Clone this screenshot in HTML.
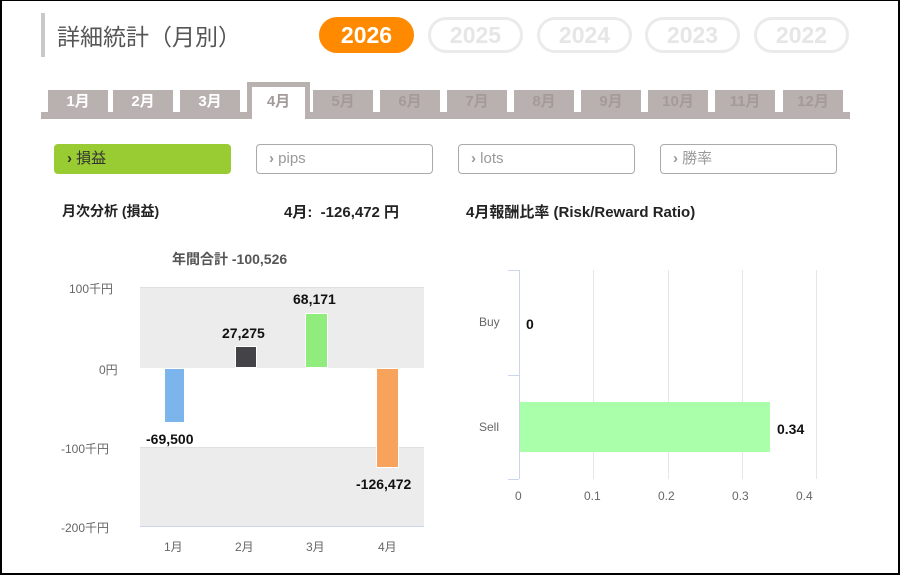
<!DOCTYPE html>
<html><head><meta charset="utf-8"><style>
*{margin:0;padding:0;box-sizing:border-box}
body{width:900px;height:575px;position:relative;background:#fff;font-family:"Liberation Sans","Noto Sans CJK JP",sans-serif;overflow:hidden}
.frame{position:absolute;left:0;top:0;width:900px;height:575px;border:2px solid #000;border-top-width:1px}
.a{position:absolute}
.pill{position:absolute;top:17px;height:36px;width:95px;border-radius:18px;font-weight:bold;font-size:23px;text-align:center;line-height:30px;border:3px solid #ebebeb;color:#e6e6e6}
.tab{position:absolute;top:90px;width:60px;height:24px;background:#b9b1b0;color:#a39a99;font-weight:bold;font-size:15px;text-align:center;line-height:24px}
.btn{position:absolute;top:144px;width:177px;height:30px;border:1px solid #aaa;border-radius:4px;font-size:15px;color:#999;line-height:28px;padding-left:12px}
.lbl{font-size:12px;color:#666;position:absolute}
.v{font-size:14px;font-weight:bold;color:#111;position:absolute}
</style></head><body>
<div class="a" style="left:41px;top:13px;width:4px;height:44px;background:#c8c8c8"></div>
<div class="a" style="left:57px;top:18px;font-size:23px;color:#555">詳細統計（月別）</div>
<div class="pill" style="left:319px;background:#ff8a00;border-color:#ff8a00;color:#fff">2026</div>
<div class="pill" style="left:428px">2025</div>
<div class="pill" style="left:537px">2024</div>
<div class="pill" style="left:645px">2023</div>
<div class="pill" style="left:754px">2022</div>

<div class="a" style="left:41px;top:112px;width:809px;height:7px;background:#b9b1b0"></div>
<div class="tab" style="left:48px;color:#fff">1月</div>
<div class="tab" style="left:113px;color:#fff">2月</div>
<div class="tab" style="left:180px;color:#fff">3月</div>
<div class="a" style="left:247px;top:82px;width:63px;height:37px;background:#fff;border:5px solid #b9b1b0;border-bottom:none;color:#a39a99;font-weight:bold;font-size:15px;text-align:center;line-height:30px">4月</div>
<div class="tab" style="left:313px">5月</div>
<div class="tab" style="left:380px">6月</div>
<div class="tab" style="left:447px">7月</div>
<div class="tab" style="left:514px">8月</div>
<div class="tab" style="left:581px">9月</div>
<div class="tab" style="left:648px">10月</div>
<div class="tab" style="left:715px">11月</div>
<div class="tab" style="left:783px">12月</div>

<div class="btn" style="left:54px;background:#99cc33;border-color:#99cc33;color:#333"><b>›</b> 損益</div>
<div class="btn" style="left:256px"><b>›</b> pips</div>
<div class="btn" style="left:458px"><b>›</b> lots</div>
<div class="btn" style="left:660px"><b>›</b> 勝率</div>

<div class="a" style="left:62px;top:201px;font-size:14px;font-weight:bold;color:#222">月次分析 (損益)</div>
<div class="a" style="left:284px;top:201px;font-size:15px;font-weight:bold;color:#222">4月:&nbsp; -126,472 円</div>
<div class="a" style="left:466px;top:201px;font-size:15px;font-weight:bold;color:#222">4月報酬比率 (Risk/Reward Ratio)</div>

<div class="a" style="left:172px;top:249px;font-size:14px;font-weight:bold;color:#555">年間合計 -100,526</div>
<div class="a" style="left:140px;top:287px;width:284px;height:81px;background:#ececec;border-top:1px solid #e0e0e0"></div>
<div class="a" style="left:140px;top:447px;width:284px;height:80px;background:#ececec;border-top:1px solid #e0e0e0;border-bottom:1px solid #ccd6eb"></div>
<div class="lbl" style="left:69px;top:280px">100千円</div>
<div class="lbl" style="left:99px;top:361px">0円</div>
<div class="lbl" style="left:61px;top:440px">-100千円</div>
<div class="lbl" style="left:61px;top:519px">-200千円</div>
<div class="a" style="left:164px;top:368px;width:21px;height:55px;background:#7cb5ec;border:1px solid #fff"></div>
<div class="a" style="left:235px;top:346px;width:22px;height:22px;background:#434348;border:1px solid #fff"></div>
<div class="a" style="left:305px;top:313px;width:23px;height:55px;background:#90ed7d;border:1px solid #fff"></div>
<div class="a" style="left:376px;top:368px;width:23px;height:100px;background:#f7a35c;border:1px solid #fff"></div>
<div class="v" style="left:146px;top:431px">-69,500</div>
<div class="v" style="left:222px;top:325px">27,275</div>
<div class="v" style="left:293px;top:291px">68,171</div>
<div class="v" style="left:356px;top:476px">-126,472</div>
<div class="lbl" style="left:164px;top:538px">1月</div>
<div class="lbl" style="left:235px;top:538px">2月</div>
<div class="lbl" style="left:306px;top:538px">3月</div>
<div class="lbl" style="left:378px;top:538px">4月</div>

<div class="a" style="left:593px;top:270px;width:1px;height:209px;background:#e6e6e6"></div>
<div class="a" style="left:668px;top:270px;width:1px;height:209px;background:#e6e6e6"></div>
<div class="a" style="left:742px;top:270px;width:1px;height:209px;background:#e6e6e6"></div>
<div class="a" style="left:816px;top:270px;width:1px;height:209px;background:#e6e6e6"></div>
<div class="a" style="left:519px;top:270px;width:1px;height:209px;background:#ccd6eb"></div>
<div class="a" style="left:508px;top:270px;width:11px;height:1px;background:#ccd6eb"></div>
<div class="a" style="left:508px;top:375px;width:11px;height:1px;background:#ccd6eb"></div>
<div class="a" style="left:508px;top:479px;width:11px;height:1px;background:#ccd6eb"></div>
<div class="a" style="left:520px;top:402px;width:250px;height:50px;background:#aaffaa"></div>
<div class="lbl" style="left:479px;top:315px">Buy</div>
<div class="lbl" style="left:479px;top:420px">Sell</div>
<div class="v" style="left:526px;top:316px">0</div>
<div class="v" style="left:777px;top:421px">0.34</div>
<div class="lbl" style="left:515px;top:489px">0</div>
<div class="lbl" style="left:584px;top:489px">0.1</div>
<div class="lbl" style="left:658px;top:489px">0.2</div>
<div class="lbl" style="left:732px;top:489px">0.3</div>
<div class="lbl" style="left:796px;top:489px">0.4</div>
<div class="frame"></div>
</body></html>
